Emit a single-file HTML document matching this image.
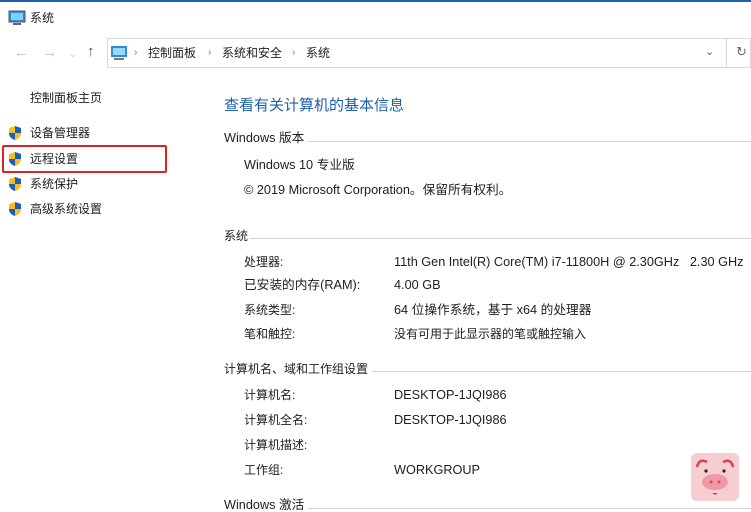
<!DOCTYPE html>
<html><head><meta charset="utf-8"><style>
body{margin:0;width:751px;height:512px;overflow:hidden;background:#fff;font-family:"Liberation Sans","Noto Sans CJK SC",sans-serif;font-size:12px;color:#1e1e1e;position:relative}
.a{position:absolute;white-space:nowrap;line-height:14px}
.v{font-size:12.7px}
.l{position:absolute;height:1px;background:#d5d5d5}
.sh{position:absolute;width:14px;height:16px}
</style></head><body>
<div style="position:absolute;left:0;top:0;width:751px;height:2px;background:#1a5fb4"></div>
<svg class="a" style="left:8px;top:10px" width="18" height="16"><rect x="1" y="1" width="16" height="11" fill="#2a8fd8" stroke="#555" stroke-width="1"/><rect x="3" y="3" width="12" height="7" fill="#7fd0f8"/><rect x="5" y="13" width="8" height="2" fill="#666"/></svg>
<div class="a" style="left:30px;top:11px">系统</div>
<div class="a" style="left:14px;top:46px;color:#c0c0c0;font-size:15px">←</div>
<div class="a" style="left:42px;top:46px;color:#c0c0c0;font-size:15px">→</div>
<div class="a" style="left:69px;top:47px;color:#c0c0c0;font-size:9px">⌄</div>
<div class="a" style="left:87px;top:45px;color:#555;font-size:15px">↑</div>
<div style="position:absolute;left:107px;top:38px;width:644px;height:30px;border:1px solid #d9d9d9;box-sizing:border-box"></div>
<div class="l" style="left:726px;top:38px;width:1px;height:30px"></div>
<svg class="a" style="left:110px;top:45px" width="18" height="16"><rect x="1" y="1" width="16" height="11" fill="#2a8fd8"/><rect x="3" y="3" width="12" height="7" fill="#9ad8f8"/><rect x="4" y="13" width="10" height="2" fill="#777"/></svg>
<div class="a" style="left:134px;top:46px;color:#777;font-size:10px">›</div>
<div class="a" style="left:148px;top:46px">控制面板</div>
<div class="a" style="left:208px;top:46px;color:#777;font-size:10px">›</div>
<div class="a" style="left:222px;top:46px">系统和安全</div>
<div class="a" style="left:292px;top:46px;color:#777;font-size:10px">›</div>
<div class="a" style="left:306px;top:46px">系统</div>
<div class="a" style="left:705px;top:45px;color:#666;font-size:11px">⌄</div>
<div class="a" style="left:736px;top:45px;color:#666;font-size:13px">↻</div>

<div class="a" style="left:30px;top:91px">控制面板主页</div>
<svg class="sh" style="left:8px;top:125px" viewBox="0 0 14 16"><path d="M7 1L13 3V8C13 12 10 14 7 15C4 14 1 12 1 8V3Z" fill="#f4c020"/><path d="M7 1L13 3V8H7ZM7 8H1C1 12 4 14 7 15Z" fill="#1f5cb8"/></svg>
<div class="a" style="left:30px;top:126px">设备管理器</div>
<svg class="sh" style="left:8px;top:151px" viewBox="0 0 14 16"><path d="M7 1L13 3V8C13 12 10 14 7 15C4 14 1 12 1 8V3Z" fill="#f4c020"/><path d="M7 1L13 3V8H7ZM7 8H1C1 12 4 14 7 15Z" fill="#1f5cb8"/></svg>
<div class="a" style="left:30px;top:152px">远程设置</div>
<div style="position:absolute;left:2px;top:145px;width:165px;height:28px;border:2px solid #e02020;border-radius:2px;box-sizing:border-box"></div>
<svg class="sh" style="left:8px;top:176px" viewBox="0 0 14 16"><path d="M7 1L13 3V8C13 12 10 14 7 15C4 14 1 12 1 8V3Z" fill="#f4c020"/><path d="M7 1L13 3V8H7ZM7 8H1C1 12 4 14 7 15Z" fill="#1f5cb8"/></svg>
<div class="a" style="left:30px;top:177px">系统保护</div>
<svg class="sh" style="left:8px;top:201px" viewBox="0 0 14 16"><path d="M7 1L13 3V8C13 12 10 14 7 15C4 14 1 12 1 8V3Z" fill="#f4c020"/><path d="M7 1L13 3V8H7ZM7 8H1C1 12 4 14 7 15Z" fill="#1f5cb8"/></svg>
<div class="a" style="left:30px;top:202px">高级系统设置</div>

<div class="a" style="left:224px;top:97px;color:#1e5fa8;font-size:15px;line-height:18px">查看有关计算机的基本信息</div>
<div class="a v" style="left:224px;top:131px">Windows 版本</div><div class="l" style="left:307px;top:141px;width:444px"></div>
<div class="a v" style="left:244px;top:158px">Windows 10 专业版</div>
<div class="a v" style="left:244px;top:183px">© 2019 Microsoft Corporation。保留所有权利。</div>
<div class="a" style="left:224px;top:229px">系统</div><div class="l" style="left:250px;top:238px;width:501px"></div>
<div class="a" style="left:244px;top:255px">处理器:</div><div class="a v" style="left:394px;top:255px">11th Gen Intel(R) Core(TM) i7-11800H @ 2.30GHz &nbsp; 2.30 GHz</div>
<div class="a v" style="left:244px;top:278px">已安装的内存(RAM):</div><div class="a v" style="left:394px;top:278px">4.00 GB</div>
<div class="a" style="left:244px;top:303px">系统类型:</div><div class="a v" style="left:394px;top:303px">64 位操作系统，基于 x64 的处理器</div>
<div class="a" style="left:244px;top:327px">笔和触控:</div><div class="a" style="left:394px;top:327px">没有可用于此显示器的笔或触控输入</div>
<div class="a" style="left:224px;top:362px">计算机名、域和工作组设置</div><div class="l" style="left:372px;top:371px;width:379px"></div>
<div class="a" style="left:244px;top:388px">计算机名:</div><div class="a v" style="left:394px;top:388px">DESKTOP-1JQI986</div>
<div class="a" style="left:244px;top:413px">计算机全名:</div><div class="a v" style="left:394px;top:413px">DESKTOP-1JQI986</div>
<div class="a" style="left:244px;top:438px">计算机描述:</div>
<div class="a" style="left:244px;top:463px">工作组:</div><div class="a v" style="left:394px;top:463px">WORKGROUP</div>
<div class="a v" style="left:224px;top:498px">Windows 激活</div><div class="l" style="left:307px;top:508px;width:444px"></div>

<svg class="a" style="left:691px;top:453px" width="48" height="48" viewBox="0 0 48 48"><rect width="48" height="48" rx="6" fill="#f7cdd2"/><path d="M6 14Q8 5 16 9" stroke="#d94050" stroke-width="2.5" fill="none"/><path d="M42 14Q40 5 32 9" stroke="#d94050" stroke-width="2.5" fill="none"/><circle cx="15" cy="18" r="1.6" fill="#222"/><circle cx="33" cy="18" r="1.6" fill="#222"/><ellipse cx="24" cy="29" rx="13" ry="8" fill="#ee98a5"/><circle cx="20" cy="29" r="1.5" fill="#c85060"/><circle cx="28" cy="29" r="1.5" fill="#c85060"/><path d="M21 40L24 42L27 40Z" fill="#d94050"/></svg>
</body></html>
